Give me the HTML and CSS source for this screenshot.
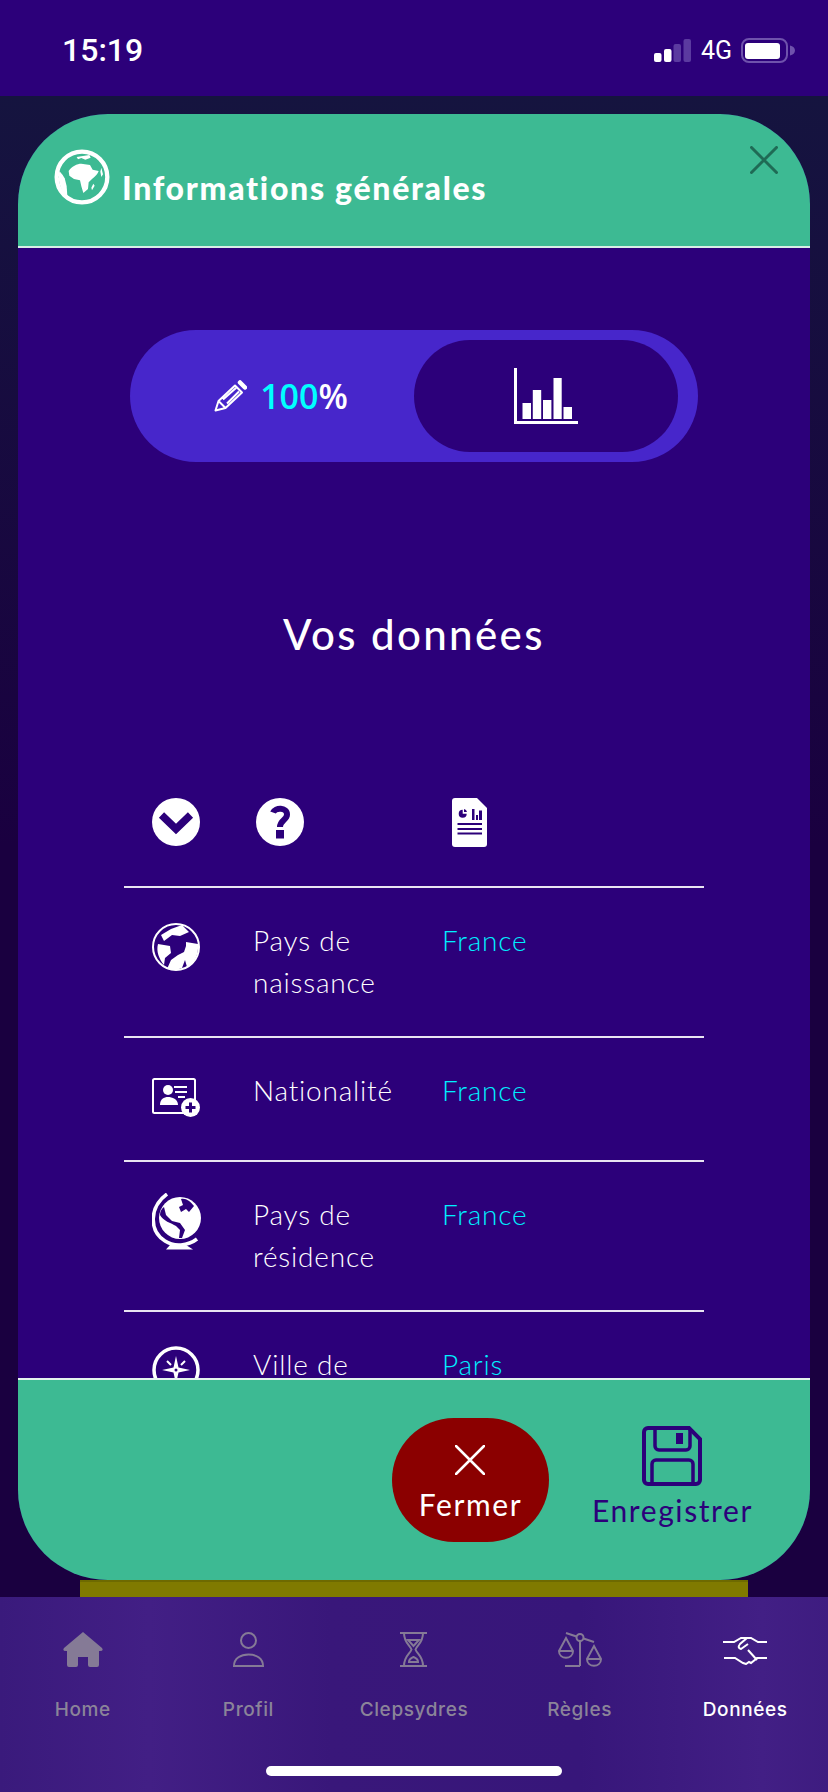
FILE: index.html
```html
<!DOCTYPE html>
<html lang="fr">
<head>
    <meta charset="UTF-8">
    <meta name="viewport" content="width=device-width, initial-scale=1.0">
    <title>Informations générales</title>
    <link rel="stylesheet" href="styles.css">
</head>
<body>
    <div class="status-bar">
        <span class="time">15:19</span>
        <div class="status-right">
            <svg class="signal" width="37" height="23" viewBox="0 0 37 23">
                <rect x="0" y="14" width="7.500" height="9" rx="2" fill="#fff"/>
                <rect x="10" y="10" width="7.500" height="13" rx="2" fill="#fff"/>
                <rect x="19.500" y="5" width="7.500" height="18" rx="2" fill="#5b3aa0"/>
                <rect x="29.500" y="0" width="7.500" height="23" rx="2" fill="#5b3aa0"/>
            </svg>
            <span class="network">4G</span>
            <svg class="battery" width="54" height="25" viewBox="0 0 54 25">
                <rect x="1" y="1" width="45" height="23" rx="7" fill="none" stroke="#6f52ac" stroke-width="2"/>
                <rect x="4" y="5" width="35" height="16" rx="3" fill="#fff"/>
                <path d="M49 7.500 C52 8 54 10 54 12.500 C54 15 52 17 49 17.500 Z" fill="#6f52ac"/>
            </svg>
        </div>
    </div>

    <div class="screen">
        <div class="modal">
            <div class="modal-header">
                <svg class="header-globe" width="56" height="56" viewBox="18 18 168 168">
                    <circle cx="102" cy="102" r="76" fill="none" stroke="#fff" stroke-width="13"/>
                    <path d="M62 84 C70 70 88 62 100 62 L126 66 L134 80 L152 84 C150 92 142 100 132 108 L122 118 L120 138 L106 150 L100 130 L96 112 L78 108 L64 98 Z" fill="#fff"/>
                    <path d="M86 42 L124 36 L128 44 L112 50 L100 45 L90 49 Z" fill="#fff"/>
                    <path d="M34 84 L44 96 L50 106 L56 130 L58 160 C46 150 38 136 34 120 C32 108 32 94 34 84 Z" fill="#fff"/>
                    <path d="M160 74 L165 94 L160 102 L157 86 Z M136 122 L140 128 L132 142 L130 134 Z" fill="#fff"/>
                </svg>
                <h1 class="modal-title">Informations générales</h1>
                <svg class="close-icon" width="28" height="28" viewBox="0 0 28 28">
                    <path d="M1.500 1.500 L26.500 26.500 M26.500 1.500 L1.500 26.500" stroke="#1f6b55" stroke-width="3" stroke-linecap="round"/>
                </svg>
            </div>

            <div class="modal-body">
                <div class="toggle">
                    <div class="toggle-left">
                        <svg width="33" height="32" viewBox="0 0 33 32">
                            <path d="M1.500 30.500 L4.500 21 L21 5.500 L28 12.500 L11.500 28 Z M4.500 21 L11.500 28 M9 19.500 L22 8 M13 23.500 L25 11.500" fill="none" stroke="#fff" stroke-width="2" stroke-linejoin="round"/>
                            <path d="M26 2.500 L31 7.500" stroke="#fff" stroke-width="4.500" stroke-linecap="round"/>
                        </svg>
                        <span class="percent"><span class="percent-num">100</span>%</span>
                    </div>
                    <div class="toggle-right">
                        <svg width="64" height="56" viewBox="0 0 64 56">
                            <path d="M0 0 H3 V53 H64 V56 H0 Z" fill="#fff"/>
                            <path d="M8.500 35 H17 V51 H8.500 Z M18.800 22 H27.200 V51 H18.800 Z M29 32 H37.400 V51 H29 Z M39.500 10 H47.700 V51 H39.500 Z M49.500 39 H58 V51 H49.500 Z" fill="#fff"/>
                        </svg>
                    </div>
                </div>

                <h2 class="section-title">Vos données</h2>

                <div class="data-table">
                    <div class="row row-head">
                        <svg width="48" height="48" viewBox="0 0 48 48">
                            <circle cx="24" cy="24" r="24" fill="#fff"/>
                            <path d="M9.500 17 L24 31 L38.500 17" fill="none" stroke="#2c007a" stroke-width="7.500"/>
                        </svg>
                        <svg class="head-question" width="48" height="48" viewBox="0 0 48 48">
                            <circle cx="24" cy="24" r="24" fill="#fff"/>
                            <path d="M17 14.500 C19 9.500 31 9 31 16.500 C31 22 24 22 24 29" fill="none" stroke="#2c007a" stroke-width="6"/>
                            <rect x="20" y="32" width="8" height="8.500" fill="#2c007a"/>
                        </svg>
                        <svg class="head-file" width="35" height="49" viewBox="0 0 35 49">
                            <path d="M3 0 H25 L35 10 V46 A3 3 0 0 1 32 49 H3 A3 3 0 0 1 0 46 V3 A3 3 0 0 1 3 0 Z" fill="#fff"/>
                            <path d="M10.700 11.700 A4 4 0 1 0 14.700 15.700 H10.700 Z" fill="#2c007a"/>
                            <path d="M12 11 A4 4 0 0 1 15 14 H12 Z" fill="#2c007a"/>
                            <path d="M20 11 H22.500 V22 H20 Z M24 17 H26 V22 H24 Z M27 12.500 H30 V22 H27 Z" fill="#2c007a"/>
                            <path d="M5.500 26 H30 M5.500 31 H30 M5.500 35.500 H30" stroke="#2c007a" stroke-width="1.800"/>
                        </svg>
                    </div>

                    <div class="row">
                        <svg class="row-icon" width="48" height="50" viewBox="0 0 48 50">
                            <circle cx="24" cy="25" r="23" fill="none" stroke="#fff" stroke-width="2"/>
                            <path d="M6 22 L18 24 L19 31 L13 36 L12 43 C7 37 4 29 6 22 Z" fill="#fff"/>
                            <path d="M15 47 L19 38 L26 33 L32 30 L34 24 L34 20 L46 22 C47 32 42 42 35 45 L33 38 L30 46 C25 48 20 48 15 47 Z" fill="#fff"/>
                            <path d="M9 13 L19 7 L30 3 L37 10 L28 14 L20 13 L12 19 Z" fill="#fff"/>
                        </svg>
                        <div class="row-label">Pays de<br>naissance</div>
                        <div class="row-value">France</div>
                    </div>

                    <div class="row row-short">
                        <svg class="row-icon row-icon-card" width="48" height="39" viewBox="0 0 48 39">
                            <rect x="1" y="1" width="42" height="34" rx="1.500" fill="none" stroke="#fff" stroke-width="2"/>
                            <circle cx="16" cy="12" r="5" fill="#fff"/>
                            <path d="M8 27 C8 21 12 19 16 19 C20 19 26 21 26 27 Z" fill="#fff"/>
                            <path d="M22 9 H35 M23 14 H35 M26 19 H33" stroke="#fff" stroke-width="2"/>
                            <circle cx="38.500" cy="29.500" r="9.500" fill="#fff"/>
                            <path d="M38.500 24.500 V34.500 M33.500 29.500 H43.500" stroke="#2c007a" stroke-width="3"/>
                        </svg>
                        <div class="row-label">Nationalité</div>
                        <div class="row-value">France</div>
                    </div>

                    <div class="row">
                        <svg class="row-icon row-icon-stand" width="50" height="57" viewBox="0 0 50 57">
                            <circle cx="28" cy="25" r="21" fill="#fff"/>
                            <path d="M15 1 C-3 14 -3 38 13 48 C22 54 36 53 45 46" fill="none" stroke="#fff" stroke-width="3.500"/>
                            <path d="M14 56.500 L18 52 H34 L41 56.500 Z" fill="#fff"/>
                            <path d="M29 6 L31 12 L27 14 L29 19 L34 16 L37 19 L42 13 C38 8 34 5 29 6 Z" fill="#2c007a"/>
                            <path d="M8 22 C11 28 19 30 24 33 L28 37 L27 45 L30 45 L33 37 L28 30 L20 28 L14 22 L12 14 C9 16 8 19 8 22 Z" fill="#2c007a"/>
                        </svg>
                        <div class="row-label">Pays de<br>résidence</div>
                        <div class="row-value">France</div>
                    </div>

                    <div class="row">
                        <svg class="row-icon" width="48" height="48" viewBox="0 0 48 48">
                            <circle cx="24" cy="24" r="22" fill="none" stroke="#fff" stroke-width="3.500"/>
                            <path d="M24 10 L26.500 21.500 L38 24 L26.500 26.500 L24 38 L21.500 26.500 L10 24 L21.500 21.500 Z" fill="#fff"/>
                            <circle cx="24" cy="24" r="1.500" fill="#2c007a"/>
                            <path d="M15 15 L19 19 M33 15 L29 19" stroke="#fff" stroke-width="2"/>
                        </svg>
                        <div class="row-label">Ville de<br>résidence</div>
                        <div class="row-value">Paris</div>
                    </div>
                </div>
            </div>

            <div class="modal-footer">
                <button class="btn-close">
                    <svg width="30" height="30" viewBox="0 0 30 30">
                        <path d="M1 1 L29 29 M29 1 L1 29" stroke="#fff" stroke-width="2.500" stroke-linecap="round"/>
                    </svg>
                    <span>Fermer</span>
                </button>
                <button class="btn-save">
                    <svg width="60" height="60" viewBox="0 0 60 60">
                        <path d="M6 2 H47 L58 13 V54 A4 4 0 0 1 54 58 H6 A4 4 0 0 1 2 54 V6 A4 4 0 0 1 6 2 Z" fill="none" stroke="#2c007a" stroke-width="4"/>
                        <path d="M13 2 V20 A4 4 0 0 0 17 24 H44 A4 4 0 0 0 48 20 V4" fill="none" stroke="#2c007a" stroke-width="3.500"/>
                        <rect x="34" y="7" width="7" height="11" fill="#2c007a"/>
                        <path d="M10 58 V38 A4 4 0 0 1 14 34 H47 A4 4 0 0 1 51 38 V58" fill="none" stroke="#2c007a" stroke-width="3.500"/>
                    </svg>
                    <span>Enregistrer</span>
                </button>
            </div>
        </div>
        <div class="olive-strip"></div>
    </div>

    <nav class="tab-bar">
        <div class="tab">
            <svg width="40" height="35" viewBox="0 0 40 35">
                <path d="M20 0 L39 16 Q41 19 37 19 H36 V33 Q36 35 34 35 H27 Q25 35 25 33 V25 H15 V33 Q15 35 13 35 H6 Q4 35 4 33 V19 H3 Q-1 19 1 16 Z" fill="#857a96"/>
            </svg>
            <span>Home</span>
        </div>
        <div class="tab">
            <svg width="31" height="35" viewBox="0 0 31 35">
                <circle cx="15.500" cy="8.500" r="7.500" fill="none" stroke="#857a96" stroke-width="2"/>
                <path d="M1 34 C1 26 8 22.500 15.500 22.500 C23 22.500 30 26 30 34 Z" fill="none" stroke="#857a96" stroke-width="2"/>
            </svg>
            <span>Profil</span>
        </div>
        <div class="tab">
            <svg width="27" height="35" viewBox="0 0 27 35">
                <path d="M0 1 H27 M0 34 H27 M4 1 C4 11 10 13 11.500 17.500 C10 22 4 24 4 34 M23 1 C23 11 17 13 15.500 17.500 C17 22 23 24 23 34" fill="none" stroke="#857a96" stroke-width="2"/>
                <path d="M8 8 H19 L13.500 14 Z M9 30 C9 27 11 26 13.500 25 C16 26 18 27 18 30 Z" fill="none" stroke="#857a96" stroke-width="2"/>
            </svg>
            <span>Clepsydres</span>
        </div>
        <div class="tab">
            <svg width="44" height="35" viewBox="0 0 44 35">
                <circle cx="22" cy="5.500" r="3.500" fill="none" stroke="#857a96" stroke-width="2"/>
                <path d="M8 1 L18.500 4.500 M25.500 6.500 L36 10 M22 9 V34 M7 34 H22" fill="none" stroke="#857a96" stroke-width="2"/>
                <path d="M1 19 L8 6 L15 19 C15 28 1 28 1 19 Z M1 19 H15" fill="none" stroke="#857a96" stroke-width="2"/>
                <path d="M29 27 L36 14 L43 27 C43 36 29 36 29 27 Z M29 27 H43" fill="none" stroke="#857a96" stroke-width="2"/>
            </svg>
            <span>Règles</span>
        </div>
        <div class="tab tab-active">
            <svg class="handshake" width="44" height="28" viewBox="0 0 44 28">
                <path d="M0 5 H11 L18 1 H28 L35 5 H44" fill="none" stroke="#fff" stroke-width="2"/>
                <path d="M24 1 L17 7 Q14 11 18 12 L25 7 M25 13 L34 23" fill="none" stroke="#fff" stroke-width="2"/>
                <path d="M1 21 H12 L20 26 L23 27 L26 25 L28 26 L33 22 L34 21 H44" fill="none" stroke="#fff" stroke-width="2"/>
            </svg>
            <span>Données</span>
        </div>
        <div class="home-indicator"></div>
    </nav>
</body>
</html>
```

FILE: styles.css
```css
* {
    margin: 0;
    padding: 0;
    box-sizing: border-box;
}

body {
    width: 828px;
    height: 1792px;
    overflow: hidden;
    display: flex;
    flex-direction: column;
    font-family: Lato, "Open Sans", sans-serif;
    background-color: #2c007a;
}

svg {
    display: block;
    flex-shrink: 0;
}

/* Status bar */
.status-bar {
    height: 96px;
    flex-shrink: 0;
    display: flex;
    align-items: center;
    justify-content: space-between;
    padding: 4px 33px 0 62px;
    color: #fff;
}

.time {
    font-family: Roboto, sans-serif;
    font-size: 32px;
    font-weight: 500;
}

.status-right {
    display: flex;
    align-items: center;
}

.network {
    font-family: Roboto, sans-serif;
    font-size: 25px;
    margin: 0 9px 0 10px;
}

/* Dark backdrop behind the modal */
.screen {
    flex: 1;
    display: flex;
    flex-direction: column;
    background: linear-gradient(180deg, #15143f 0%, #1a0040 50%, #1a0040 100%);
}

.modal {
    height: 1466px;
    flex-shrink: 0;
    margin: 18px 18px 0;
    border-radius: 90px;
    overflow: hidden;
    display: flex;
    flex-direction: column;
    background-color: #2c007a;
}

.olive-strip {
    flex: 1;
    margin: 0 80px;
    background-color: #807a00;
    border-top: 2px solid #6e6a00;
}

.modal-header {
    height: 134px;
    flex-shrink: 0;
    position: relative;
    background-color: #3dba93;
    border-bottom: 2px solid #d6efe6;
    padding: 35px 0 0 36px;
    display: flex;
}

.modal-title {
    font-size: 32px;
    font-weight: 900;
    letter-spacing: 1.700px;
    color: #fff;
    margin: 17px 0 0 12px;
    line-height: 44px;
}

.close-icon {
    position: absolute;
    top: 32px;
    right: 32px;
}

.modal-body {
    flex: 1;
    min-height: 0;
    overflow: hidden;
    padding-top: 82px;
    color: #fff;
}

/* Edit / stats toggle */
.toggle {
    width: 568px;
    height: 132px;
    margin: 0 auto;
    padding: 10px 20px 10px 0;
    border-radius: 66px;
    background-color: #4726cb;
    display: flex;
}

.toggle-left {
    flex: 1;
    display: flex;
    align-items: center;
    justify-content: center;
    gap: 13px;
    padding-left: 18px;
}

.percent {
    font-family: "Open Sans", sans-serif;
    font-size: 34px;
    font-weight: 600;
    color: #fff;
}

.percent-num {
    color: #00ffff;
}

.toggle-right {
    width: 264px;
    border-radius: 56px;
    background-color: #2c007a;
    display: flex;
    align-items: center;
    justify-content: center;
}

.section-title {
    font-size: 42px;
    font-weight: 500;
    letter-spacing: 2.400px;
    line-height: 50px;
    text-align: center;
    margin-top: 147px;
}

/* Data rows */
.data-table {
    width: 580px;
    margin: 139px 0 0 106px;
}

.row {
    display: grid;
    grid-template-columns: 101px 189px 1fr;
    padding: 31px 0 33px 28px;
    border-bottom: 2px solid #e8e4f2;
    font-size: 28px;
    font-weight: 300;
    line-height: 42px;
    letter-spacing: 0.800px;
}

.row-head {
    padding: 0 0 39px 28px;
}

.row-short {
    min-height: 124px;
}

.row-icon {
    margin-top: 3px;
}

.row-icon-card {
    margin-top: 9px;
}

.row-icon-stand {
    margin-top: 0;
}

.head-question {
    margin-left: 3px;
}

.head-file {
    margin-left: 10px;
}

.row-value {
    color: #00f0ff;
}

/* Footer buttons */
.modal-footer {
    height: 202px;
    flex-shrink: 0;
    background-color: #3dba93;
    border-top: 2px solid #e4f4ee;
    display: flex;
    justify-content: flex-end;
    align-items: flex-start;
    padding: 38px 57px 0 0;
    gap: 43px;
}

.btn-close,
.btn-save {
    border: none;
    background: none;
    font-family: inherit;
    font-size: 30px;
    font-weight: 400;
    letter-spacing: 1.600px;
    display: flex;
    flex-direction: column;
    align-items: center;
}

.btn-close {
    width: 157px;
    height: 124px;
    border-radius: 62px;
    background-color: #8b0000;
    color: #fff;
    padding-top: 27px;
    gap: 11px;
}

.btn-save {
    color: #2c007a;
    padding-top: 8px;
    gap: 6px;
}

/* Bottom tabs */
.tab-bar {
    height: 195px;
    flex-shrink: 0;
    position: relative;
    display: grid;
    grid-template-columns: repeat(5, 1fr);
    align-items: start;
    padding-top: 35px;
    background: linear-gradient(90deg, #3a1a7c 0%, #421f85 18%, #39177a 40%, #37167a 70%, #421f85 92%, #3e1c80 100%);
}

.tab {
    height: 90px;
    display: flex;
    flex-direction: column;
    align-items: center;
    justify-content: space-between;
    font-family: Inter, sans-serif;
    font-size: 19px;
    font-weight: 500;
    letter-spacing: 0.600px;
    color: #8b8499;
}

.tab span {
    line-height: 24px;
}

.handshake {
    margin-top: 5px;
}

.tab-active {
    color: #fff;
}

.home-indicator {
    position: absolute;
    left: 266px;
    bottom: 16px;
    width: 296px;
    height: 10px;
    border-radius: 5px;
    background-color: #fff;
}
```
